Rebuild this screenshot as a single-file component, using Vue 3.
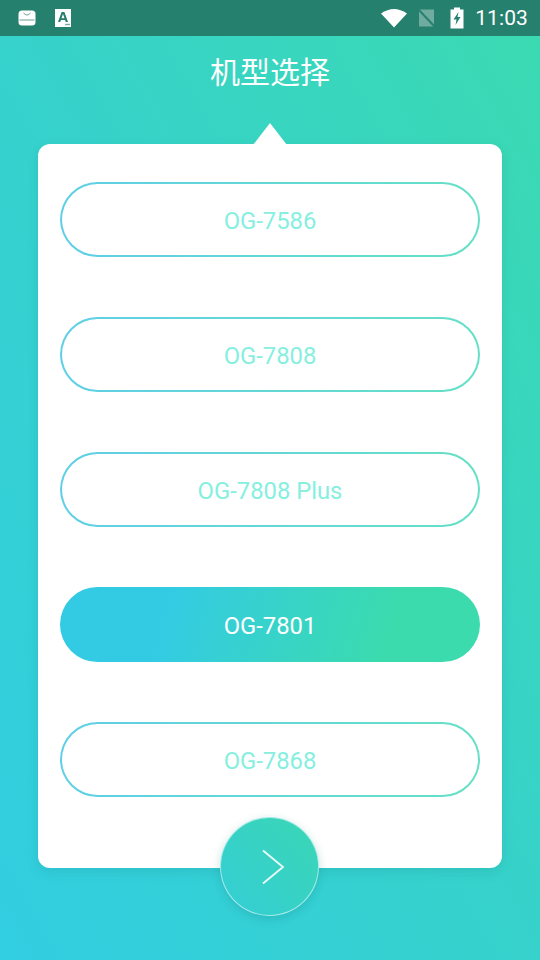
<script setup>
const models = [
  { name: 'OG-7586', active: false },
  { name: 'OG-7808', active: false },
  { name: 'OG-7808 Plus', active: false },
  { name: 'OG-7801', active: true },
  { name: 'OG-7868', active: false },
]
</script>

<template>
  <div class="page">
    <header class="status">
      <div class="status-left">
        <svg class="notif" width="18" height="16" viewBox="0 0 18 16">
          <rect x="0.5" y="0.5" width="17" height="15" rx="3.5" fill="#fff" />
          <path d="M5.5 3 Q9 7 12.5 3" fill="none" stroke="#6f9f93" stroke-width="1" />
          <rect x="1.5" y="9.2" width="15" height="1.6" fill="#a5c4bb" />
        </svg>
        <svg class="notif-a" width="16" height="18" viewBox="0 0 16 18">
          <rect width="16" height="18" fill="#fff" />
          <path d="M6.6 3 H9.4 L13 13 H10.8 L10.1 11 H5.9 L5.2 13 H3 Z M6.5 9.2 H9.5 L8 5 Z" fill="#2a7d6c" fill-rule="evenodd" />
          <rect x="10" y="14.8" width="5" height="1.4" fill="#7aab9f" />
        </svg>
      </div>
      <div class="status-right">
        <svg class="wifi" width="26" height="20" viewBox="0 0 26 20">
          <path d="M0 5.5 Q13 -3.5 26 5.5 L13 19.5 Z" fill="#fff" />
        </svg>
        <svg class="sim" width="17" height="18" viewBox="0 0 17 18">
          <path d="M1 0.5 H16 V17.5 H1 Z" fill="#fff" fill-opacity="0.34" />
          <path d="M0 0 L17 18" stroke="#25806e" stroke-width="2" />
        </svg>
        <svg class="battery" width="14" height="22" viewBox="0 0 14 22">
          <path d="M4 0.5 H10 V2.5 H13.5 V21.5 H0.5 V2.5 H4 Z" fill="#fff" />
          <path d="M8.5 5 L3.5 12.5 H6.5 L5.5 18 L10.5 10 H7.5 Z" fill="#25806e" />
        </svg>
        <span class="time">11:03</span>
      </div>
    </header>

    <h1 class="title">机型选择</h1>

    <main class="card">
      <span class="arrow"></span>
      <button
        v-for="m in models"
        :key="m.name"
        class="model"
        :class="{ active: m.active }"
        type="button"
      >{{ m.name }}</button>
      <button class="next" type="button" aria-label="下一步">
        <svg width="26" height="38" viewBox="0 0 26 38">
          <path d="M3 2.5 L23 19 L3 35.5" fill="none" stroke="#fff" stroke-opacity="0.9" stroke-width="1.8" />
        </svg>
      </button>
    </main>
  </div>
</template>

<style>
html, body { margin: 0; padding: 0; }
</style>

<style scoped>
.page {
  width: 540px;
  height: 960px;
  overflow: hidden;
  display: flex;
  flex-direction: column;
  align-items: center;
  background: linear-gradient(to top right, #32cee2 0%, #36d2cb 50%, #3bdab1 100%);
  font-family: Roboto, "Noto Sans CJK SC", sans-serif;
}
.status {
  width: 100%;
  height: 36px;
  box-sizing: border-box;
  flex: none;
  display: flex;
  align-items: center;
  justify-content: space-between;
  padding: 0 12px 0 18px;
  background: #25806e;
  color: #fff;
}
.status-left {
  display: flex;
  align-items: center;
  gap: 19px;
}
.status-right {
  display: flex;
  align-items: center;
}
.wifi { margin-right: 11px; }
.sim { margin-right: 15px; }
.battery { margin-right: 11px; }
.time {
  font-size: 21px;
  line-height: 24px;
  letter-spacing: 0.1px;
}
.title {
  flex: none;
  margin: 0;
  height: 108px;
  padding-top: 1px;
  box-sizing: border-box;
  line-height: 72px;
  font-size: 30px;
  font-weight: 400;
  color: #fff;
}
.card {
  position: relative;
  width: 464px;
  height: 724px;
  box-sizing: border-box;
  flex: none;
  padding: 38px 22px 0;
  display: flex;
  flex-direction: column;
  gap: 60px;
  background: #fff;
  border-radius: 12px;
  box-shadow: 0 4px 12px rgba(20, 110, 110, 0.16);
}
.arrow {
  position: absolute;
  top: -21px;
  left: 215px;
  width: 0;
  height: 0;
  border-left: 17px solid transparent;
  border-right: 17px solid transparent;
  border-bottom: 22px solid #fff;
}
.model {
  flex: none;
  height: 75px;
  box-sizing: border-box;
  padding: 2px 0 0;
  border: 2px solid transparent;
  border-radius: 38px;
  background:
    linear-gradient(#fff, #fff) padding-box,
    linear-gradient(to right, #5fcfe6, #66e0c6) border-box;
  color: #86efe0;
  font: 400 23.8px Roboto, sans-serif;
  text-align: center;
}
.model.active {
  border: 0;
  background: linear-gradient(105deg, #33cbe4 25%, #3bdbae 78%);
  color: #fff;
}
.next {
  position: absolute;
  left: 182px;
  top: 673px;
  width: 99px;
  height: 99px;
  box-sizing: border-box;
  padding: 0 0 0 6px;
  display: flex;
  align-items: center;
  justify-content: center;
  border: 1px solid rgba(255, 255, 255, 0.55);
  border-radius: 50%;
  background: linear-gradient(to top right, #34ced6, #3ad6b4);
  box-shadow: 0 3px 10px rgba(20, 110, 110, 0.22);
}
</style>
